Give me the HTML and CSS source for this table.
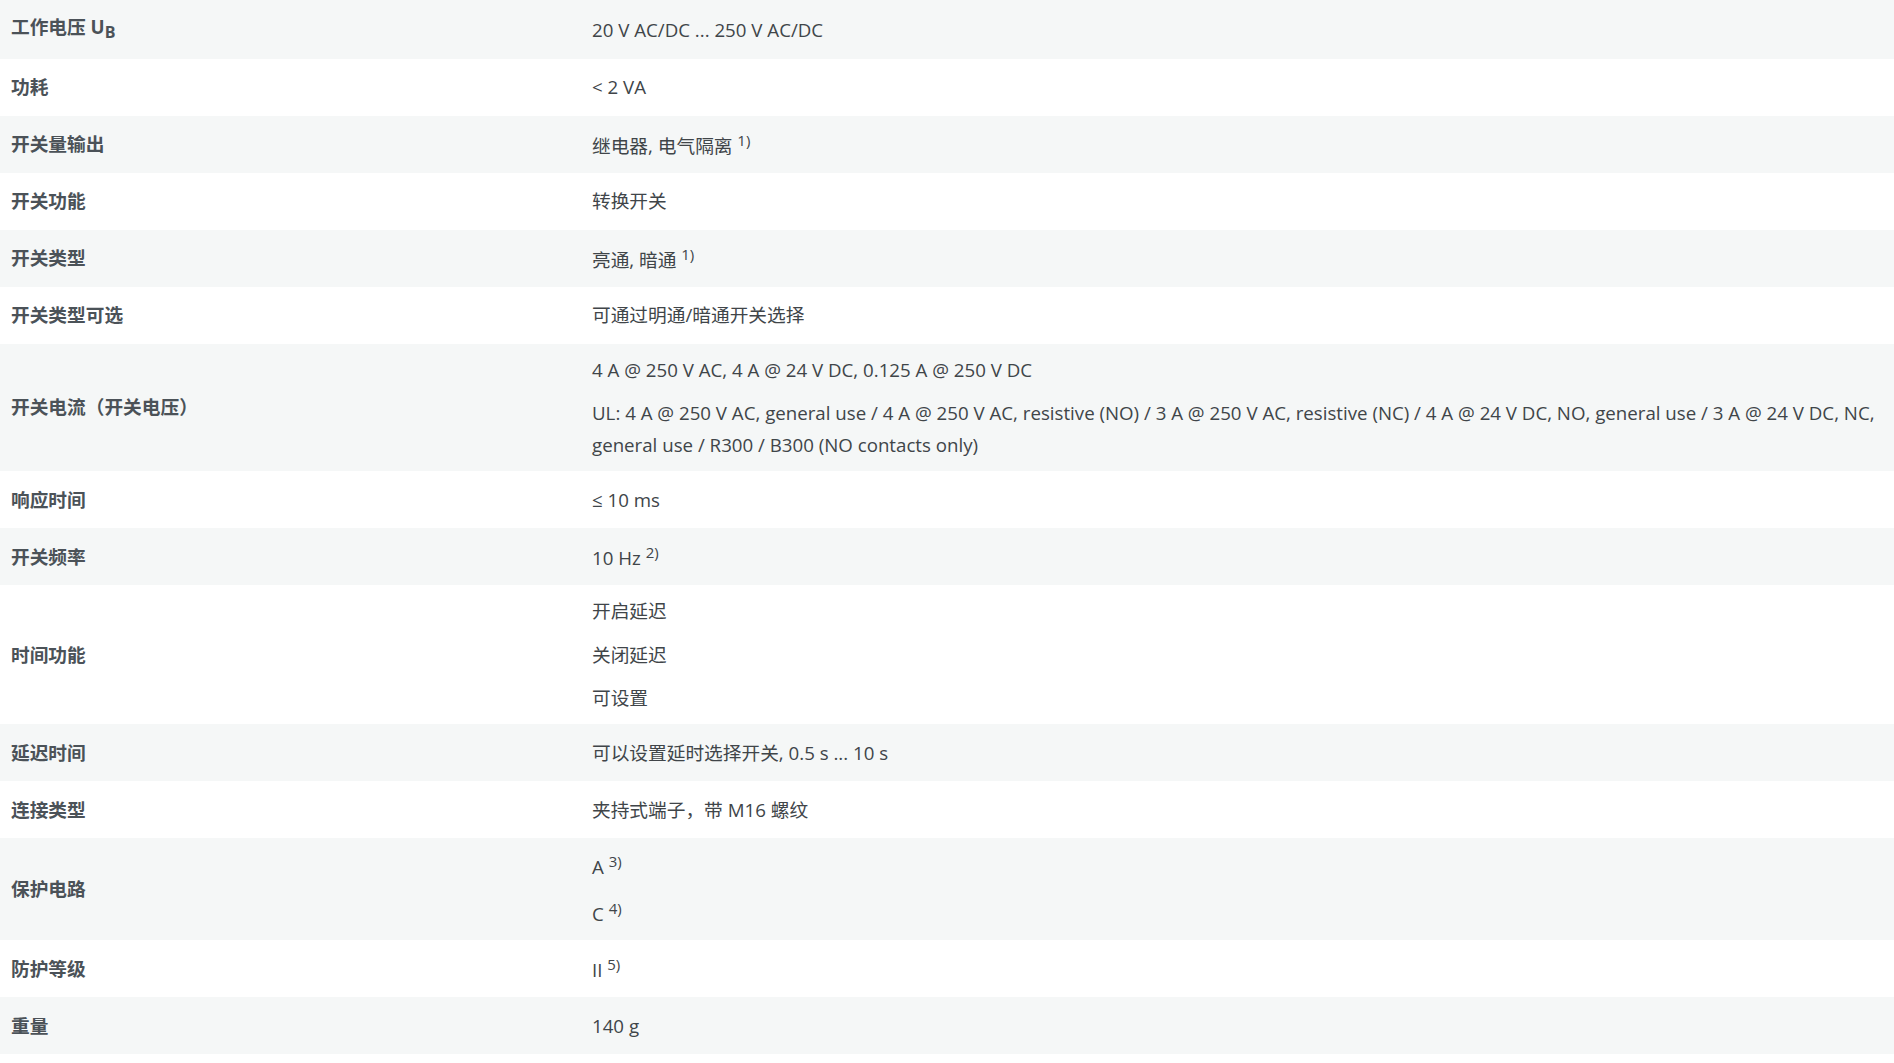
FILE: index.html
```html
<!DOCTYPE html>
<html lang="zh-CN">
<head>
  <meta charset="UTF-8" />
  <title>技术数据</title>
  <link rel="stylesheet" href="styles.css">
</head>
<body>
  <table class="specs">
    <tbody>
      <tr>
        <th>工作电压 U<sub>B</sub></th>
        <td><p>20 V AC/DC ... 250 V AC/DC</p></td>
      </tr>
      <tr>
        <th>功耗</th>
        <td><p>&lt; 2 VA</p></td>
      </tr>
      <tr>
        <th>开关量输出</th>
        <td><p>继电器, 电气隔离 <sup>1)</sup></p></td>
      </tr>
      <tr>
        <th>开关功能</th>
        <td><p>转换开关</p></td>
      </tr>
      <tr>
        <th>开关类型</th>
        <td><p>亮通, 暗通 <sup>1)</sup></p></td>
      </tr>
      <tr>
        <th>开关类型可选</th>
        <td><p>可通过明通/暗通开关选择</p></td>
      </tr>
      <tr>
        <th>开关电流（开关电压）</th>
        <td>
          <p>4 A @ 250 V AC, 4 A @ 24 V DC, 0.125 A @ 250 V DC</p>
          <p>UL: 4 A @ 250 V AC, general use / 4 A @ 250 V AC, resistive (NO) / 3 A @ 250 V AC, resistive (NC) / 4 A @ 24 V DC, NO, general use / 3 A @ 24 V DC, NC, general use / R300 / B300 (NO contacts only)</p>
        </td>
      </tr>
      <tr>
        <th>响应时间</th>
        <td><p>≤ 10 ms</p></td>
      </tr>
      <tr>
        <th>开关频率</th>
        <td><p>10 Hz <sup>2)</sup></p></td>
      </tr>
      <tr>
        <th>时间功能</th>
        <td>
          <p>开启延迟</p>
          <p>关闭延迟</p>
          <p>可设置</p>
        </td>
      </tr>
      <tr>
        <th>延迟时间</th>
        <td><p>可以设置延时选择开关, 0.5 s ... 10 s</p></td>
      </tr>
      <tr>
        <th>连接类型</th>
        <td><p>夹持式端子，带 M16 螺纹</p></td>
      </tr>
      <tr>
        <th>保护电路</th>
        <td>
          <p>A <sup>3)</sup></p>
          <p>C <sup>4)</sup></p>
        </td>
      </tr>
      <tr>
        <th>防护等级</th>
        <td><p>II <sup>5)</sup></p></td>
      </tr>
      <tr>
        <th>重量</th>
        <td><p>140 g</p></td>
      </tr>
    </tbody>
  </table>
</body>
</html>
```

FILE: styles.css
```css
body {
  margin: 0;
  background: #fff;
  font-family: "Open Sans", "Noto Sans CJK SC", sans-serif;
  font-size: 18.7px;
  line-height: 31.5px;
  color: #404549;
}
.specs {
  width: 100%;
  border-collapse: collapse;
  table-layout: fixed;
}
.specs tr { height: 57px; }
.specs tr:nth-child(odd) { background: #f5f7f7; }
.specs th {
  width: 556px;
  padding: 10.5px 12px 10.5px 11px;
  text-align: left;
  vertical-align: middle;
  font-weight: 700;
  color: #4b5258;
}
.specs td {
  padding: 10.5px 12px 10.5px 13px;
  vertical-align: middle;
}
.specs p { margin: 0; }
.specs p + p { margin-top: 11.8px; }
sup {
  font-size: 15px;
  line-height: 27px;
}
sub {
  font-size: 16px;
  line-height: 31.5px;
  vertical-align: -4px;
}
```
